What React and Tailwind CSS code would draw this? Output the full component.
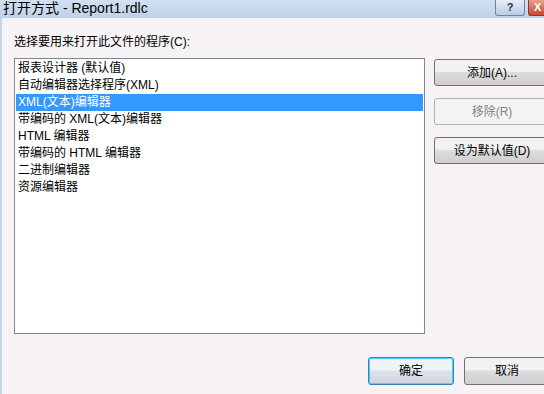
import React from "react";

const items = [
  "报表设计器 (默认值)",
  "自动编辑器选择程序(XML)",
  "XML(文本)编辑器",
  "带编码的 XML(文本)编辑器",
  "HTML 编辑器",
  "带编码的 HTML 编辑器",
  "二进制编辑器",
  "资源编辑器",
];

const font = { fontFamily: '"Liberation Sans", "Noto Sans CJK SC", sans-serif' };

function Button({ children, disabled, focused, className = "" }) {
  return (
    <div
      className={
        "shrink-0 flex items-center justify-center rounded-[3px] border text-[12px] " +
        (disabled
          ? "border-[#adb2b5] bg-[#f4f4f4] text-[#838383] "
          : focused
          ? "border-[#3c7fb1] bg-gradient-to-b from-[#eef3f7] from-45% via-[#dde3e8] via-50% to-[#cfd6dc] text-black shadow-[inset_0_0_0_1px_#48d1ff] "
          : "border-[#707070] bg-gradient-to-b from-[#f2f2f2] from-45% via-[#dddddd] via-50% to-[#cfcfcf] text-black ") +
        className
      }
    >
      {children}
    </div>
  );
}

export default function App() {
  return (
    <div className="w-[544px] h-[394px] overflow-hidden bg-[#f6f2f6] flex flex-col" style={font}>
      {/* title bar */}
      <div className="h-[18px] bg-gradient-to-b from-[#d3e0f1] to-[#bfd2ea] flex items-start justify-between shrink-0">
        <div className="pl-[3px] text-[14px] leading-[17px] text-black">打开方式 - Report1.rdlc</div>
        <div className="flex gap-[3px]">
          <div className="w-[30px] h-[16px] rounded-b-[3px] border border-t-0 border-[#6d84a8] bg-gradient-to-b from-[#e6eef8] to-[#bccce2] flex items-center justify-center text-[11px] font-bold text-[#1e2f4e] leading-none">
            ?
          </div>
          <div className="w-[16px] h-[16px] rounded-bl-[3px] border border-t-0 border-r-0 border-[#8a3a2a] bg-gradient-to-b from-[#e8a08c] to-[#c7472d] flex items-center pl-[5px] text-[11px] font-bold text-white leading-none">
            X
          </div>
        </div>
      </div>

      <div className="flex-1 border-l-2 border-[#c8d5ea] flex flex-col">
        <div className="pl-[12px] pt-[17px] text-[12px] leading-[14px] text-black">选择要用来打开此文件的程序(C):</div>

        <div className="flex pl-[12px] pt-[9px]">
          <div className="shrink-0 w-[411px] h-[276px] border border-[#828790] bg-white p-px">
            {items.map((t, i) => (
              <div
                key={t}
                className={
                  "h-[17px] pl-[2px] text-[12px] leading-[17px] whitespace-nowrap " +
                  (i === 2 ? "bg-[#3399ff] text-white" : "text-black")
                }
              >
                {t}
              </div>
            ))}
          </div>

          <div className="shrink-0 ml-[9px] pt-px flex flex-col gap-[12px]">
            <Button className="w-[116px] h-[27px]">添加(A)...</Button>
            <Button disabled className="w-[116px] h-[27px]">移除(R)</Button>
            <Button className="w-[116px] h-[27px]">设为默认值(D)</Button>
          </div>
        </div>

        <div className="flex pl-[366px] pt-[23px] gap-[10px]">
          <Button focused className="w-[86px] h-[28px]">确定</Button>
          <Button className="w-[86px] h-[28px]">取消</Button>
        </div>
      </div>
    </div>
  );
}
